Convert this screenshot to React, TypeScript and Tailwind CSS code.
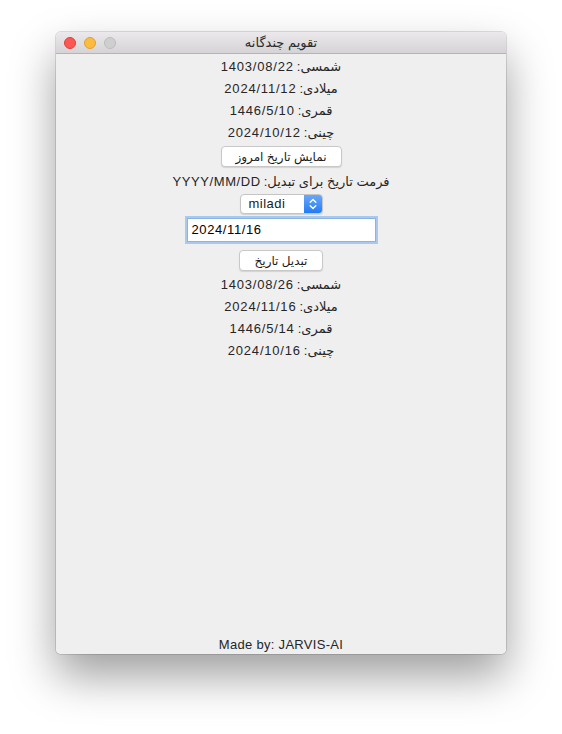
const font = { fontFamily: '"Liberation Sans", "DejaVu Sans", sans-serif' }

const Row = ({ label, value }: { label: string; value: string }) => (
  <div dir="rtl" className="h-[22px] flex items-center justify-center text-[13px] text-[#262626]">
    {label}: <span className="tracking-[0.8px] mr-[3px]">{value}</span>
  </div>
)

const MacButton = ({ children, w }: { children: React.ReactNode; w: string }) => (
  <button
    dir="rtl"
    className={`${w} h-[21px] flex items-center justify-center rounded-[4px] bg-white border border-[#c8c8c8] shadow-[0_1px_1px_rgba(0,0,0,0.12)] text-[12px] text-[#1a1a1a] font-medium`}
  >
    {children}
  </button>
)

export default function App() {
  return (
    <div className="w-[562px] h-[734px] bg-white relative" style={font}>
      <div className="absolute left-[56px] top-[32px] w-[450px] h-[622px] flex flex-col rounded-[5px] overflow-hidden shadow-[0_22px_45px_rgba(0,0,0,0.38),0_0_0_1px_rgba(0,0,0,0.12)]">
        {/* title bar */}
        <div className="h-[22px] relative flex items-center justify-center bg-gradient-to-b from-[#ebe9eb] to-[#d5d3d5] border-b border-[#b4b4b4]">
          <div className="absolute left-[8px] top-[5px] flex gap-[8px]">
            <span className="w-[12px] h-[12px] rounded-full bg-[#fc5753] border border-[#df3e3a]" />
            <span className="w-[12px] h-[12px] rounded-full bg-[#fdbc40] border border-[#de9f34]" />
            <span className="w-[12px] h-[12px] rounded-full bg-[#d0cfd0] border border-[#bdbcbd]" />
          </div>
          <span dir="rtl" className="text-[13px] text-[#2b2b2b]">تقویم چندگانه</span>
        </div>

        {/* content */}
        <div className="flex-1 flex flex-col items-center bg-[#efefef] pt-[2px]">
          <Row label="شمسی" value="1403/08/22" />
          <Row label="میلادی" value="2024/11/12" />
          <Row label="قمری" value="1446/5/10" />
          <Row label="چینی" value="2024/10/12" />

          <div className="mt-[2px]">
            <MacButton w="w-[121px]">نمایش تاریخ امروز</MacButton>
          </div>

          <div dir="rtl" className="mt-[4px] h-[22px] flex items-center text-[13px] text-[#262626]">
            فرمت تاریخ برای تبدیل: <span className="tracking-[0.6px] mr-[3px]">YYYY/MM/DD</span>
          </div>

          <div className="mt-[1px] w-[83px] h-[20px] flex rounded-[4px] bg-white border border-[#c4c4c4] shadow-[0_1px_1px_rgba(0,0,0,0.12)] overflow-hidden">
            <span className="flex-1 flex items-center pl-[8px] text-[13px] tracking-[0.5px] text-[#1a1a1a]">miladi</span>
            <span className="w-[18px] h-full bg-gradient-to-b from-[#69a8fb] to-[#1d7cf2] flex items-center justify-center">
              <svg width="8" height="12" viewBox="0 0 8 12" fill="none" stroke="white" strokeWidth="1.4" strokeLinecap="round" strokeLinejoin="round">
                <path d="M1.2 4.2 L4 1.5 L6.8 4.2" />
                <path d="M1.2 7.8 L4 10.5 L6.8 7.8" />
              </svg>
            </span>
          </div>

          <div className="mt-[4px] w-[189px] h-[24px] flex items-center bg-white border border-[#8ab4e6] ring-[2px] ring-[#a9c9ef] px-[4px] text-[13px] tracking-[0.6px] text-black">
            2024/11/16
          </div>

          <div className="mt-[8px]">
            <MacButton w="w-[84px]">تبدیل تاریخ</MacButton>
          </div>

          <div className="mt-[3px] flex flex-col items-center">
            <Row label="شمسی" value="1403/08/26" />
            <Row label="میلادی" value="2024/11/16" />
            <Row label="قمری" value="1446/5/14" />
            <Row label="چینی" value="2024/10/16" />
          </div>

          <div className="mt-auto h-[19px] flex items-center text-[13px] tracking-[0.3px] text-[#262626]">
            Made by: JARVIS-AI
          </div>
        </div>
      </div>
    </div>
  )
}
